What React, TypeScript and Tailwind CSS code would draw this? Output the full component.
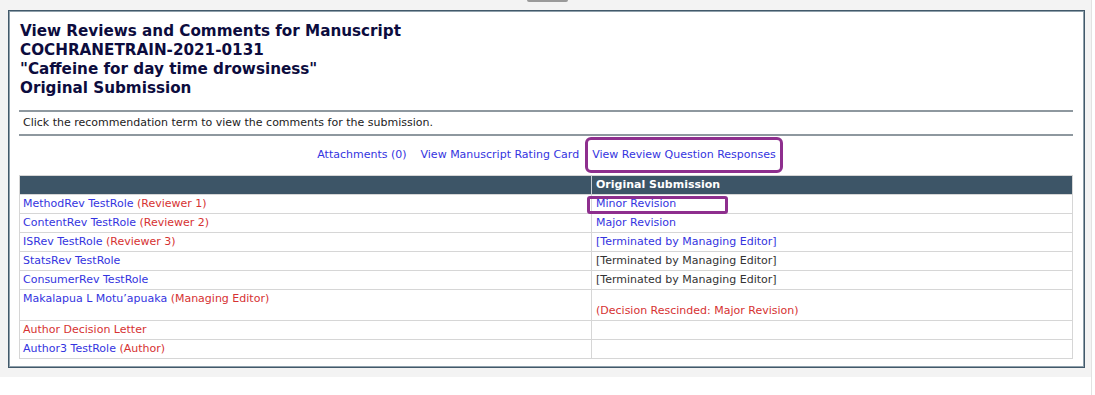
import React from 'react';

type Row = {
  name: string;
  role?: string;
  nameRed?: boolean;
  result?: string;
  resultTone?: 'link' | 'plain' | 'red';
  tall?: boolean;
  boxed?: boolean;
};

const rows: Row[] = [
  { name: 'MethodRev TestRole', role: '(Reviewer 1)', result: 'Minor Revision', resultTone: 'link', boxed: true },
  { name: 'ContentRev TestRole', role: '(Reviewer 2)', result: 'Major Revision', resultTone: 'link' },
  { name: 'ISRev TestRole', role: '(Reviewer 3)', result: '[Terminated by Managing Editor]', resultTone: 'link' },
  { name: 'StatsRev TestRole', result: '[Terminated by Managing Editor]', resultTone: 'plain' },
  { name: 'ConsumerRev TestRole', result: '[Terminated by Managing Editor]', resultTone: 'plain' },
  { name: 'Makalapua L Motu\u2019apuaka', role: '(Managing Editor)', result: '(Decision Rescinded: Major Revision)', resultTone: 'red', tall: true },
  { name: 'Author Decision Letter', nameRed: true },
  { name: 'Author3 TestRole', role: '(Author)' },
];

const toneClass = {
  link: 'text-[#3434e0]',
  plain: 'text-[#333333]',
  red: 'text-[#d63232]',
};

export default function App() {
  return (
    <div className="flex h-[395px] w-[1095px] bg-white font-['DejaVu_Sans',Verdana,sans-serif]">
      <div className="relative h-[377px] w-[1091px] bg-[#f3f3f3] pl-[8px] pt-[10px]">
        {/* little tab at the top */}
        <div className="absolute left-[527px] top-0 h-[2px] w-[41px] rounded-b-sm bg-[#9a9a9a]" />

        <div className="h-[358px] w-[1077px] border border-[#42596a] bg-white pl-[10px] pr-[11px] pt-[11px] shadow-[inset_0_0_0_1px_#8fa0ab]">
          <h1 className="pl-[1px] text-[15.2px] font-bold leading-[19px] text-[#0c0c3e]">
            View Reviews and Comments for Manuscript
            <br />
            COCHRANETRAIN-2021-0131
            <br />
            "Caffeine for day time drowsiness"
            <br />
            Original Submission
          </h1>

          <div className="mt-[12px] border-y-2 border-[#8e989f] py-[4px] pl-[4px] text-[11px] leading-[14px] text-[#222]">
            Click the recommendation term to view the comments for the submission.
          </div>

          <div className="flex h-[39px] items-center justify-center gap-[14px] pb-[1px] text-[11px] text-[#3434e0]">
            <span className="ml-[8px]">Attachments (0)</span>
            <span>View Manuscript Rating Card</span>
            <span className="-ml-[8px] flex h-[36px] items-center rounded-[6px] border-[3px] border-[#8e2f8e] px-[4px]">
              View Review Question Responses
            </span>
          </div>

          <table className="w-[1054px] border-collapse border border-[#d6d6d6] text-[11px] leading-[14px]">
            <thead>
              <tr className="h-[19px] bg-[#3d5567] text-left font-bold text-white">
                <th className="w-[572px] p-0" />
                <th className="border-l border-[#c8ced3] px-[4px] py-0 font-bold">Original Submission</th>
              </tr>
            </thead>
            <tbody>
              {rows.map((r) => (
                <tr key={r.name} className={r.tall ? 'h-[31px]' : 'h-[19px]'}>
                  <td className="border border-[#d6d6d6] px-[3px] py-0 align-top pt-[2px]">
                    <span className={r.nameRed ? 'text-[#d63232]' : 'text-[#3434e0]'}>{r.name}</span>
                    {r.role && <span className="text-[#d63232]"> {r.role}</span>}
                  </td>
                  <td className="relative border border-[#d6d6d6] px-[4px] py-0 align-bottom pb-[2px]">
                    {r.result && <span className={toneClass[r.resultTone ?? 'link']}>{r.result}</span>}
                    {r.boxed && (
                      <span className="absolute -left-[5px] top-[1px] h-[18px] w-[141px] rounded-[3px] border-[3px] border-[#8e2f8e]" />
                    )}
                  </td>
                </tr>
              ))}
            </tbody>
          </table>
        </div>
      </div>
      <div className="h-[395px] flex-1 border-l border-[#e2e2e2] bg-white" />
    </div>
  );
}
